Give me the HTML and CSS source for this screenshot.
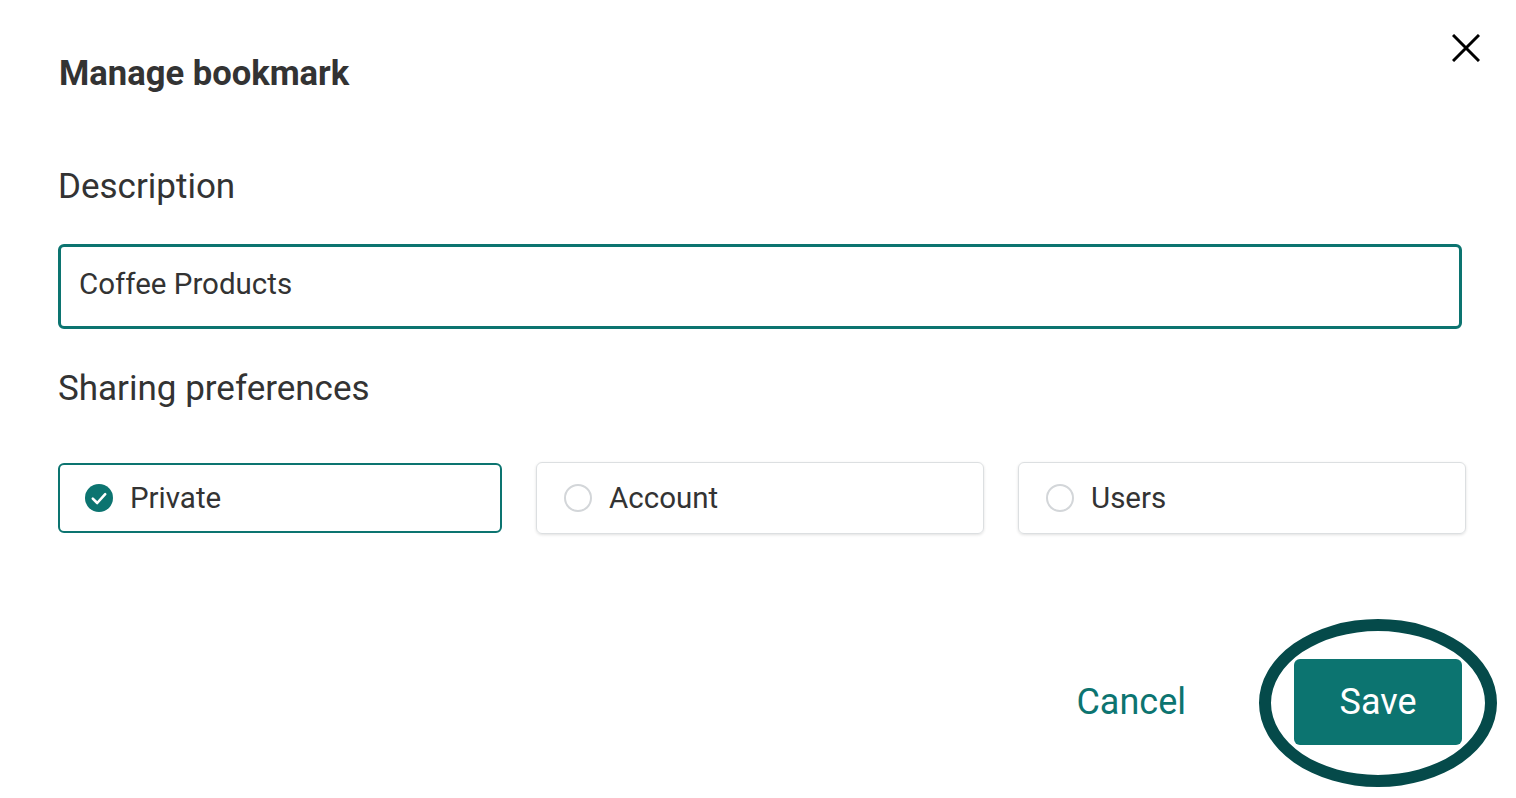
FILE: index.html
```html
<!DOCTYPE html>
<html>
<head>
<meta charset="utf-8">
<link rel="stylesheet" href="styles.css">
</head>
<body>
<div class="dialog">
  <div class="header">
    <h1 class="title">Manage bookmark</h1>
    <button class="close" aria-label="Close">
      <svg width="28" height="28" viewBox="0 0 28 28"><path d="M1 1 L27 27 M27 1 L1 27" stroke="#000" stroke-width="3" fill="none"/></svg>
    </button>
  </div>
  <div class="label desc-label">Description</div>
  <div class="input">Coffee Products</div>
  <div class="label share-label">Sharing preferences</div>
  <div class="options">
    <div class="option selected">
      <span class="check">
        <svg width="28" height="28" viewBox="0 0 28 28"><circle cx="14" cy="14" r="14" fill="#0c7470"/><path d="M7.8 14.6 L12.2 19 L20.2 10.2" stroke="#fff" stroke-width="2.6" fill="none" stroke-linecap="round" stroke-linejoin="round"/></svg>
      </span>
      <span class="opt-text">Private</span>
    </div>
    <div class="option">
      <span class="radio"></span>
      <span class="opt-text">Account</span>
    </div>
    <div class="option">
      <span class="radio"></span>
      <span class="opt-text">Users</span>
    </div>
  </div>
  <div class="footer">
    <button class="cancel">Cancel</button>
    <div class="save-wrap">
      <button class="save">Save</button>
      <div class="ring"></div>
    </div>
  </div>
</div>
</body>
</html>
```
FILE: styles.css
```css
html, body {
  margin: 0;
  padding: 0;
  background: #fff;
}
body {
  font-family: Roboto, "Liberation Sans", sans-serif;
  color: #333;
  min-height: 798px;
}
.dialog {
  width: 1404px;
  padding: 0 0 52px 58px;
}
.header {
  display: flex;
  justify-content: space-between;
  align-items: flex-start;
  height: 168px;
}
.title {
  margin: 53px 0 0 1px;
  font-size: 34.6px;
  font-weight: 700;
  color: #333;
  line-height: 40px;
  height: 40px;
}
.close {
  margin: 34px -18px 0 0;
  padding: 0;
  border: 0;
  background: none;
  width: 28px;
  height: 28px;
  display: block;
}
.close svg { display: block; }
.label {
  font-size: 35px;
  line-height: 40px;
  color: #333;
  padding-left: 0;
}
.desc-label {
  height: 76px;
  margin-top: -1px;
  padding-bottom: 1px;
}
.input {
  box-sizing: border-box;
  height: 85px;
  border: 3px solid #0c7470;
  border-radius: 6px;
  padding: 0 18px 5px;
  font-size: 29.5px;
  display: flex;
  align-items: center;
  color: #333;
}
.share-label {
  margin-top: 40px;
  height: 93px;
}
.options {
  display: grid;
  grid-template-columns: 444px 448px 448px;
  column-gap: 34px;
  width: 1406px;
  align-items: center;
}
.option {
  box-sizing: border-box;
  height: 72px;
  border: 1px solid #dcdfe1;
  border-radius: 6px;
  box-shadow: 0 1px 3px rgba(0,0,0,0.12);
  display: flex;
  align-items: center;
  padding-left: 27px;
  gap: 17px;
}
.option.selected {
  height: 70px;
  border: 2px solid #0c7470;
  box-shadow: none;
  padding-left: 25px;
}
.check svg { display: block; }
.check { width: 28px; height: 28px; }
.radio {
  box-sizing: border-box;
  width: 28px;
  height: 28px;
  border: 2.5px solid #d3d6d9;
  border-radius: 50%;
}
.opt-text {
  font-size: 29.5px;
  color: #333;
}
.footer {
  display: flex;
  justify-content: flex-end;
  align-items: center;
  margin-top: 125px;
  gap: 108px;
}
.cancel {
  border: 0;
  background: none;
  padding: 0;
  font-family: Roboto, "Liberation Sans", sans-serif;
  font-size: 36px;
  color: #0c7470;
}
.save-wrap {
  position: relative;
}
.save {
  display: block;
  width: 168px;
  height: 86px;
  border: 0;
  border-radius: 6px;
  background: #0c7470;
  color: #fff;
  font-family: Roboto, "Liberation Sans", sans-serif;
  font-size: 36px;
}
.ring {
  position: absolute;
  left: -35px;
  top: -40px;
  width: 214px;
  height: 144px;
  border: 12px solid #054a4a;
  border-radius: 50%;
}
```
